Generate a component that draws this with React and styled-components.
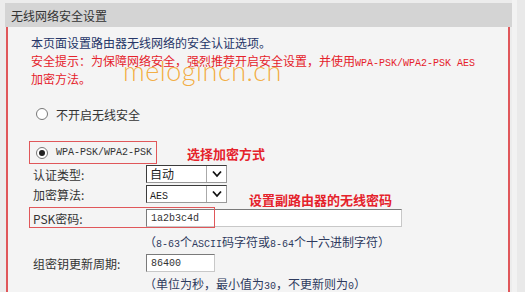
import React from 'react';
import styled, { createGlobalStyle } from 'styled-components';

const GlobalStyle = createGlobalStyle`
  body {
    margin: 0;
    background: #ececec;
    font-family: "Noto Sans CJK SC", "Liberation Sans", sans-serif;
  }
`;

const Page = styled.div`
  width: 525px;
  height: 292px;
  overflow: hidden;
  padding: 3px 0 0 5px;
  box-sizing: border-box;
  background: linear-gradient(to right, #ececec 0, #ececec 512px, #f2f2f2 512px, #f2f2f2 517px, #e9e9e9 517px);
`;

const Panel = styled.div`
  width: 507px;
  display: flex;
  flex-direction: column;
`;

const Header = styled.div`
  height: 24px;
  display: flex;
  align-items: center;
  padding-left: 6px;
  background: #d4d4d4;
  color: #333;
  font-size: 12px;
`;

const Body = styled.div`
  position: relative;
  height: 300px;
  margin-left: 1px;
  width: 504px;
  background: #f4f4f4;
  border-left: 2px solid #e0575a;
  border-right: 2px solid #e0575a;
  padding: 7px 0 0 23px;
  box-sizing: border-box;
  font-size: 12px;
`;

const Line = styled.div`
  height: 18px;
  line-height: 18px;
  color: ${({ red }) => (red ? '#e5222b' : '#263668')};
  white-space: nowrap;
`;

const Mono = styled.span`
  font-family: "Liberation Mono", monospace;
  font-size: 10px;
`;

const Watermark = styled.div`
  position: absolute;
  left: 115px;
  top: 27px;
  font-family: Lato, "Liberation Sans", sans-serif;
  font-weight: 300;
  font-size: 27px;
  letter-spacing: 0.5px;
  color: rgba(242, 165, 45, 0.9);
  pointer-events: none;
`;

const RadioRow = styled.div`
  display: flex;
  align-items: center;
  gap: 8px;
  height: ${({ boxed }) => (boxed ? '21px' : '20px')};
  margin-top: ${({ top }) => top}px;
  margin-left: -2px;
  padding: 0 4px 0 6px;
  width: fit-content;
  min-width: ${({ boxed }) => (boxed ? '116px' : '0')};
  border: 1px solid ${({ boxed }) => (boxed ? '#e0575a' : 'transparent')};
  color: #333;
`;

const RadioDot = styled.span`
  width: 10px;
  height: 10px;
  border-radius: 50%;
  border: 1px solid #777;
  background: #fff;
  display: flex;
  align-items: center;
  justify-content: center;
  &::after {
    content: '';
    width: 6px;
    height: 6px;
    border-radius: 50%;
    background: ${({ checked }) => (checked ? '#222' : 'transparent')};
  }
`;

const Note = styled.span`
  position: absolute;
  left: ${({ left }) => left}px;
  top: ${({ top }) => top}px;
  color: #e5222b;
  font-weight: bold;
  font-size: 13px;
`;

const FieldRow = styled.div`
  position: relative;
  display: grid;
  grid-template-columns: 113px auto;
  align-items: center;
  height: ${({ h }) => h || 20}px;
  margin-top: ${({ top }) => top || 0}px;
  padding-left: 2px;
  color: #333;
`;

const OptionRow = styled.div`
  position: relative;
  height: 23px;
  margin-top: 16px;
`;

const Highlight = styled.div`
  position: absolute;
  left: -2px;
  top: 0;
  width: 186px;
  height: 21px;
  border: 1px solid #e0575a;
  box-sizing: border-box;
`;

const Select = styled.div`
  width: 81px;
  height: 18px;
  display: flex;
  border: 1px solid #3b3b3b;
  border-right-color: #999;
  border-bottom-color: #999;
  background: #fff;
  box-sizing: border-box;
`;

const SelectValue = styled.div`
  flex: 1;
  padding-left: 3px;
  line-height: 16px;
  color: #222;
`;

const SelectArrow = styled.div`
  width: 19px;
  border-left: 1px solid #aaa;
  display: flex;
  align-items: center;
  justify-content: center;
  background: #fff;
`;

const Input = styled.div`
  width: ${({ w }) => w}px;
  height: 18px;
  box-sizing: border-box;
  background: #fff;
  border: 1px solid #7a7a7a;
  border-right-color: #c8c8c8;
  border-bottom-color: #c8c8c8;
  padding-left: 4px;
  display: flex;
  align-items: center;
  color: #333;
`;

const Hint = styled.div`
  height: 18px;
  line-height: 18px;
  padding-left: 113px;
  margin-top: ${({ top }) => top || 0}px;
  color: #2e3a5e;
  white-space: nowrap;
`;

const Chevron = () => (
  <svg width="10" height="8" viewBox="0 0 10 8">
    <path d="M1 1.5 L5 6 L9 1.5" fill="none" stroke="#111" strokeWidth="1.8" />
  </svg>
);

const App = () => (
  <>
    <GlobalStyle />
    <Page>
      <Panel>
        <Header>无线网络安全设置</Header>
        <Body>
          <Line>本页面设置路由器无线网络的安全认证选项。</Line>
          <Line red>
            安全提示：为保障网络安全，强烈推荐开启安全设置，并使用<Mono>WPA-PSK/WPA2-PSK AES</Mono>
          </Line>
          <Line red>加密方法。</Line>
          <Watermark>melogincn.cn</Watermark>

          <RadioRow top={15}>
            <RadioDot />
            <span>不开启无线安全</span>
          </RadioRow>
          <OptionRow>
            <RadioRow boxed top={0}>
              <RadioDot checked />
              <Mono>WPA-PSK/WPA2-PSK</Mono>
            </RadioRow>
            <Note left={156} top={3}>选择加密方式</Note>
          </OptionRow>

          <FieldRow>
            <span>认证类型:</span>
            <Select>
              <SelectValue>自动</SelectValue>
              <SelectArrow><Chevron /></SelectArrow>
            </Select>
          </FieldRow>
          <FieldRow>
            <span>加密算法:</span>
            <Select>
              <SelectValue><Mono>AES</Mono></SelectValue>
              <SelectArrow><Chevron /></SelectArrow>
            </Select>
            <Note left={218} top={6}>设置副路由器的无线密码</Note>
          </FieldRow>

          <FieldRow h={22} top={3}>
            <Highlight />
            <span>PSK密码:</span>
            <Input w={256}><Mono>1a2b3c4d</Mono></Input>
          </FieldRow>
          <Hint top={4}>（<Mono>8-63</Mono>个<Mono>ASCII</Mono>码字符或<Mono>8-64</Mono>个十六进制字符）</Hint>

          <FieldRow top={2}>
            <span>组密钥更新周期:</span>
            <Input w={69}><Mono>86400</Mono></Input>
          </FieldRow>
          <Hint top={2}>（单位为秒，最小值为<Mono>30</Mono>，不更新则为<Mono>0</Mono>）</Hint>
        </Body>
      </Panel>
    </Page>
  </>
);

export default App;
